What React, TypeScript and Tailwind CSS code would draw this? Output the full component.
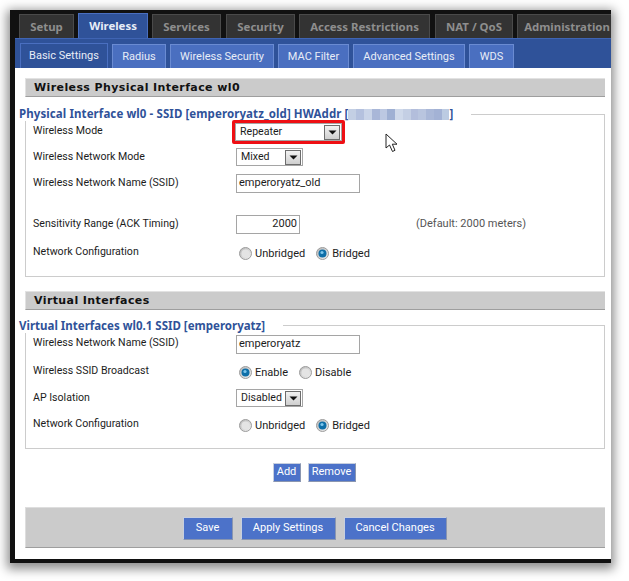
const topTabs = [
  { name: 'Setup', w: 'w-[55px]', ml: 'ml-[4px]' },
  { name: 'Wireless', w: 'w-[70px]', ml: 'ml-[4px]', active: true },
  { name: 'Services', w: 'w-[69px]', ml: 'ml-[4px]' },
  { name: 'Security', w: 'w-[69px]', ml: 'ml-[5px]' },
  { name: 'Access Restrictions', w: 'w-[131px]', ml: 'ml-[4px]' },
  { name: 'NAT / QoS', w: 'w-[78px]', ml: 'ml-[5px]' },
  { name: 'Administration', w: 'w-[100px]', ml: 'ml-[4px]' },
];

const subTabs = [
  { name: 'Basic Settings', w: 'w-[88px]', ml: 'ml-[5px]', active: true },
  { name: 'Radius', w: 'w-[54px]', ml: 'ml-[4px]' },
  { name: 'Wireless Security', w: 'w-[104px]', ml: 'ml-[4px]' },
  { name: 'MAC Filter', w: 'w-[71px]', ml: 'ml-[4px]' },
  { name: 'Advanced Settings', w: 'w-[112px]', ml: 'ml-[4px]' },
  { name: 'WDS', w: 'w-[45px]', ml: 'ml-[4px]' },
];

const mosaic = ['#c3cfe4', '#b4c1de', '#c9d4e8', '#a9b7d8', '#bcc8e2', '#9fb0d3', '#cfd9ea', '#c4cfe4', '#b3bedc', '#b9c5df', '#aab8d8', '#a3b2d5', '#bccbe2'];

const SelectBox = ({ value, w }: { value: string; w: string }) => (
  <div className={`${w} h-[18px] border border-[#a5a5a5] bg-white flex items-center justify-between p-px`}>
    <span className="pl-[3px] leading-none text-[10.6px]">{value}</span>
    <span className="w-[16px] h-[15px] border border-[#6d6d6d] bg-gradient-to-b from-[#f2f2f2] to-[#cfcfcf] flex items-center justify-center">
      <svg width="9" height="6" viewBox="0 0 9 6">
        <path d="M0.5 1.5 H8.5 L4.5 5.5 Z" fill="#111" />
      </svg>
    </span>
  </div>
);

const TextBox = ({ value, w, right }: { value: string; w: string; right?: boolean }) => (
  <div className={`${w} h-[19px] border border-[#a5a5a5] bg-white flex items-center px-[2px] ${right ? 'justify-end' : ''}`}>
    {value}
  </div>
);

const Radio = ({ on }: { on?: boolean }) => (
  <svg width="13" height="13" viewBox="0 0 13 13" className="shrink-0">
    <defs>
      <linearGradient id="rg" x1="0" y1="0" x2="1" y2="1">
        <stop offset="0" stopColor="#b5b5b5" />
        <stop offset="1" stopColor="#f4f4f4" />
      </linearGradient>
    </defs>
    <circle cx="6.5" cy="6.5" r="6" fill="url(#rg)" stroke="#9c9c9c" />
    <circle cx="6.5" cy="6.5" r="4" fill={on ? '#0f6fa8' : '#e4e4e4'} />
    {on && <circle cx="6" cy="5.5" r="1.6" fill="#7cc6ec" />}
  </svg>
);

const RadioPair = ({ a, b, first, gap }: { a: string; b: string; first?: boolean; gap: string }) => (
  <div className="flex items-center mt-[1px] ml-[3px]">
    <Radio on={first} />
    <span className="ml-[3px] mt-[2px]">{a}</span>
    <span className={`${gap} flex items-center`}>
      <Radio on={!first} />
      <span className="ml-[3px] mt-[2px]">{b}</span>
    </span>
  </div>
);

const Row = ({ label, h, children }: { label: string; h: string; children: React.ReactNode }) => (
  <div className={`flex items-start ${h}`}>
    <div className="w-[203px] shrink-0 leading-[14px] text-[10.6px]">{label}</div>
    <div className="flex items-start -mt-[2px]">{children}</div>
  </div>
);

const Heading = ({ text }: { text: string }) => (
  <div className="h-[19px] ml-[10px] mr-[6px] bg-[#cbcbcb] border-t border-l border-[#e2e2e2] border-b-[#9e9e9e] border-b flex items-center pl-[8px] pt-px font-bold text-[11px] tracking-[0.4px] text-[#111] font-['DejaVu_Sans',sans-serif]">
    {text}
  </div>
);

const Btn = ({ text, w, h }: { text: string; w: string; h: string }) => (
  <div className={`${w} ${h} bg-[#4c72c9] text-white flex items-center justify-center border border-t-[#c7cfdf] border-l-[#c7cfdf] border-r-[#8a96b0] border-b-[#8a96b0]`}>
    {text}
  </div>
);

export default function App() {
  return (
    <div className="w-[629px] h-[581px] bg-white pt-[10px] pl-[10px] overflow-hidden font-['Roboto',sans-serif] text-[11px] text-[#1c1c1c]">
      <div className="w-[601px] h-[553px] bg-[#111] shadow-[0_3px_10px_3px_rgba(0,0,0,0.45)] flex flex-col">
        {/* main tabs */}
        <div className="flex items-end h-[28px] overflow-hidden shrink-0 pl-[5px]">
          {topTabs.map((t) => (
            <div
              key={t.name}
              className={`${t.w} ${t.ml} shrink-0 flex items-center justify-center whitespace-nowrap font-bold text-[11.4px] font-['Noto_Sans',sans-serif] border border-b-0 ${
                t.active
                  ? 'h-[25px] pb-[1px] bg-[#2f5299] border-[#4a6fc0] text-[#e8edf7]'
                  : 'h-[24px] bg-[#333333] border-[#4a4a4a] text-[#8e8e8e]'
              }`}
            >
              {t.name}
            </div>
          ))}
        </div>
        {/* body */}
        <div className="ml-[5px] flex-1 flex flex-col bg-white min-h-0 mb-[4px]">
          <div className="h-[30px] shrink-0 bg-[#2f5299] border-t border-[#3f64b3] flex items-end">
            {subTabs.map((t) => (
              <div
                key={t.name}
                className={`${t.w} ${t.ml} shrink-0 flex items-center justify-center whitespace-nowrap text-[11px] text-[#e8edf7] border border-b-0 ${
                  t.active ? 'h-[25px] bg-[#2f5299] border-[#4a6fc0]' : 'h-[24px] pt-px bg-[#4a6fc0] border-[#6a8bd2]'
                }`}
              >
                {t.name}
              </div>
            ))}
          </div>

          <div className="mt-[10px]">
            <Heading text="Wireless Physical Interface wl0" />
          </div>

          <fieldset className="ml-[10px] mr-[6px] mt-[10px] h-[170px] border border-[#cccccc] pl-[7px]">
            <legend className="-ml-[14px] h-[14px] leading-[14px] font-bold text-[11.5px] tracking-[0.09px] text-[#2f5299] font-['Noto_Sans',sans-serif] pr-[18px] flex items-center whitespace-nowrap">
              Physical Interface wl0 - SSID [emperoryatz_old] HWAddr [
              <span className="flex h-[11px] w-[101px]">
                {mosaic.map((c) => (
                  <span key={c} className="flex-1" style={{ background: c }} />
                ))}
              </span>
              ]
            </legend>
            <div className="pt-[3px]">
              <Row label="Wireless Mode" h="h-[26px]">
                <div className="-mt-[2px] -ml-[4px] border-[3px] border-[#ee0f14] rounded-[2px]">
                  <SelectBox value="Repeater" w="w-[107px]" />
                </div>
              </Row>
              <Row label="Wireless Network Mode" h="h-[26px]">
                <SelectBox value="Mixed" w="w-[67px]" />
              </Row>
              <Row label="Wireless Network Name (SSID)" h="h-[41px]">
                <TextBox value="emperoryatz_old" w="w-[124px]" />
              </Row>
              <Row label="Sensitivity Range (ACK Timing)" h="h-[28px]">
                <TextBox value="2000" w="w-[64px]" right />
                <span className="ml-[116px] mt-px text-[#555]">(Default: 2000 meters)</span>
              </Row>
              <Row label="Network Configuration" h="h-[26px]">
                <RadioPair a="Unbridged" b="Bridged" gap="ml-[11px]" />
              </Row>
            </div>
          </fieldset>

          <div className="mt-[14px]">
            <Heading text="Virtual Interfaces" />
          </div>

          <fieldset className="ml-[10px] mr-[6px] mt-[7px] h-[132px] border border-[#cccccc] pl-[7px]">
            <legend className="-ml-[14px] h-[16px] leading-[18px] font-bold text-[11.5px] text-[#2f5299] font-['Noto_Sans',sans-serif] pr-[18px] whitespace-nowrap">
              Virtual Interfaces wl0.1 SSID [emperoryatz]
            </legend>
            <div className="pt-[3px]">
              <Row label="Wireless Network Name (SSID)" h="h-[28px]">
                <div className="mt-px">
                  <TextBox value="emperoryatz" w="w-[124px]" />
                </div>
              </Row>
              <Row label="Wireless SSID Broadcast" h="h-[27px]">
                <RadioPair a="Enable" b="Disable" first gap="ml-[11px]" />
              </Row>
              <Row label="AP Isolation" h="h-[26px]">
                <SelectBox value="Disabled" w="w-[67px]" />
              </Row>
              <Row label="Network Configuration" h="h-[26px]">
                <RadioPair a="Unbridged" b="Bridged" gap="ml-[11px]" />
              </Row>
            </div>
          </fieldset>

          <div className="flex justify-center gap-[7px] mt-[14px] ml-[2px]">
            <Btn text="Add" w="w-[28px]" h="h-[19px]" />
            <Btn text="Remove" w="w-[48px]" h="h-[19px]" />
          </div>

          <div className="ml-[10px] mr-[6px] mt-[25px] h-[41px] bg-[#cbcbcb] border-t border-l border-[#dedede] border-b border-b-[#9e9e9e] flex items-center justify-center gap-[8px] pr-[2px] pt-[2px]">
            <Btn text="Save" w="w-[50px]" h="h-[23px]" />
            <Btn text="Apply Settings" w="w-[95px]" h="h-[23px]" />
            <Btn text="Cancel Changes" w="w-[103px]" h="h-[23px]" />
          </div>
        </div>
      </div>
      {/* mouse pointer */}
      <svg width="15" height="20" viewBox="0 0 15 20" className="absolute left-[385px] top-[133px]">
        <path d="M1 1 V15 L4.5 12 L7.5 18.5 L10 17.3 L7.3 11.2 H12 Z" fill="#fff" stroke="#222" strokeWidth="1" strokeLinejoin="round" />
      </svg>
    </div>
  );
}
